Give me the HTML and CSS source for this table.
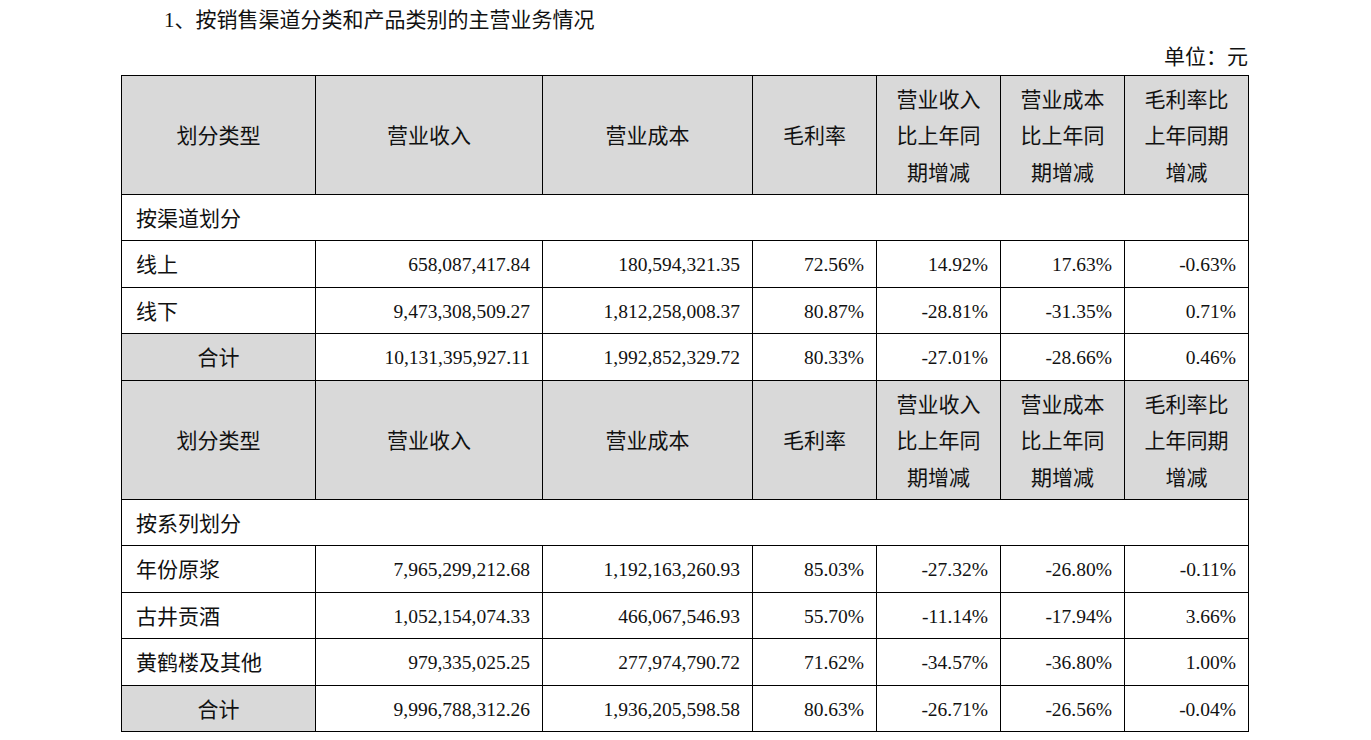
FILE: index.html
```html
<!DOCTYPE html>
<html lang="zh-CN">
<head>
<meta charset="utf-8">
<title>主营业务情况</title>
<link rel="stylesheet" href="styles.css">
</head>
<body>
<div class="page">
  <h1 class="title">1、按销售渠道分类和产品类别的主营业务情况</h1>
  <div class="unit">单位：元</div>
  <table class="tbl">
    <colgroup>
      <col class="c1"><col class="c2"><col class="c3"><col class="c4"><col class="c5"><col class="c6"><col class="c7">
    </colgroup>
    <tbody>
      <tr class="head">
        <td>划分类型</td><td>营业收入</td><td>营业成本</td><td>毛利率</td>
        <td>营业收入<br>比上年同<br>期增减</td>
        <td>营业成本<br>比上年同<br>期增减</td>
        <td>毛利率比<br>上年同期<br>增减</td>
      </tr>
      <tr class="row r46"><td colspan="7" class="sec">按渠道划分</td></tr>
      <tr class="row r47"><td class="lbl">线上</td><td class="num">658,087,417.84</td><td class="num">180,594,321.35</td><td class="num">72.56%</td><td class="num">14.92%</td><td class="num">17.63%</td><td class="num">-0.63%</td></tr>
      <tr class="row r46"><td class="lbl">线下</td><td class="num">9,473,308,509.27</td><td class="num">1,812,258,008.37</td><td class="num">80.87%</td><td class="num">-28.81%</td><td class="num">-31.35%</td><td class="num">0.71%</td></tr>
      <tr class="row r47"><td class="total">合计</td><td class="num">10,131,395,927.11</td><td class="num">1,992,852,329.72</td><td class="num">80.33%</td><td class="num">-27.01%</td><td class="num">-28.66%</td><td class="num">0.46%</td></tr>
      <tr class="head">
        <td>划分类型</td><td>营业收入</td><td>营业成本</td><td>毛利率</td>
        <td>营业收入<br>比上年同<br>期增减</td>
        <td>营业成本<br>比上年同<br>期增减</td>
        <td>毛利率比<br>上年同期<br>增减</td>
      </tr>
      <tr class="row r46"><td colspan="7" class="sec">按系列划分</td></tr>
      <tr class="row r47"><td class="lbl">年份原浆</td><td class="num">7,965,299,212.68</td><td class="num">1,192,163,260.93</td><td class="num">85.03%</td><td class="num">-27.32%</td><td class="num">-26.80%</td><td class="num">-0.11%</td></tr>
      <tr class="row r46"><td class="lbl">古井贡酒</td><td class="num">1,052,154,074.33</td><td class="num">466,067,546.93</td><td class="num">55.70%</td><td class="num">-11.14%</td><td class="num">-17.94%</td><td class="num">3.66%</td></tr>
      <tr class="row r47"><td class="lbl">黄鹤楼及其他</td><td class="num">979,335,025.25</td><td class="num">277,974,790.72</td><td class="num">71.62%</td><td class="num">-34.57%</td><td class="num">-36.80%</td><td class="num">1.00%</td></tr>
      <tr class="row r46"><td class="total">合计</td><td class="num">9,996,788,312.26</td><td class="num">1,936,205,598.58</td><td class="num">80.63%</td><td class="num">-26.71%</td><td class="num">-26.56%</td><td class="num">-0.04%</td></tr>
    </tbody>
  </table>
</div>
</body>
</html>
```

FILE: styles.css
```css
html, body {
  margin: 0;
  padding: 0;
  background: #ffffff;
}
body {
  font-family: "Liberation Serif", "Noto Sans CJK SC", serif;
  color: #111111;
}
.page {
  width: 1127px;
  padding: 8px 0 0 121px;
}
.title {
  margin: 0 0 0 43px;
  font-size: 21px;
  font-weight: normal;
  line-height: 24px;
  height: 24px;
}
.unit {
  text-align: right;
  font-size: 21px;
  line-height: 24px;
  margin-top: 13px;
  height: 30px;
}
.tbl {
  width: 1127px;
  table-layout: fixed;
  border-collapse: collapse;
  font-size: 21px;
}
.c1 { width: 194px; }
.c2 { width: 227px; }
.c3 { width: 210px; }
.c4 { width: 124px; }
.c5 { width: 124px; }
.c6 { width: 124px; }
.c7 { width: 124px; }
.tbl td {
  border: 1px solid #000000;
  padding: 0 12px;
  vertical-align: middle;
  white-space: nowrap;
}
.head td {
  background: #d9d9d9;
  text-align: center;
  height: 115px;
  line-height: 36.5px;
  padding: 3px 0 0 0;
}
.r46 td { height: 43px; }
.r47 td { height: 44px; }
.row td {
  line-height: 24px;
  padding-top: 2px;
  padding-bottom: 0;
}
.sec {
  text-align: left;
  padding-left: 14px !important;
}
.lbl {
  text-align: left;
  padding-left: 14px !important;
}
.total {
  background: #d9d9d9;
  text-align: center;
}
.num {
  text-align: right;
  font-size: 19.5px;
  padding-right: 12px !important;
}
```
